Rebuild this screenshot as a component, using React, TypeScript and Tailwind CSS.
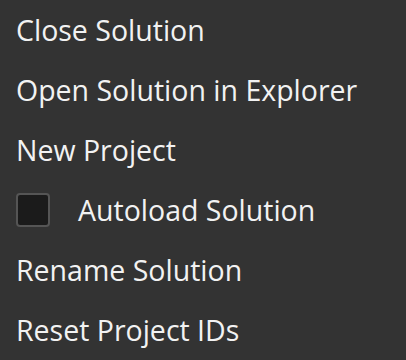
const items = [
  "Close Solution",
  "Open Solution in Explorer",
  "New Project",
  "autoload",
  "Rename Solution",
  "Reset Project IDs",
];

export default function App() {
  return (
    <div
      className="w-[406px] h-[360px] bg-[#333333] text-[#f2f2f2] overflow-hidden flex flex-col"
      style={{ fontFamily: '"Open Sans", "Noto Sans", sans-serif' }}
    >
      {items.map((label) =>
        label === "autoload" ? (
          <div key={label} className="h-[60px] flex items-center pl-4 gap-7">
            <span className="w-[34px] h-[34px] rounded-[4px] border-2 border-[#555555] bg-[#1b1b1b]" />
            <span className="text-[28.5px] leading-none">Autoload Solution</span>
          </div>
        ) : (
          <div key={label} className="h-[60px] flex items-center pl-4">
            <span className="text-[28.5px] leading-none">{label}</span>
          </div>
        )
      )}
    </div>
  );
}
